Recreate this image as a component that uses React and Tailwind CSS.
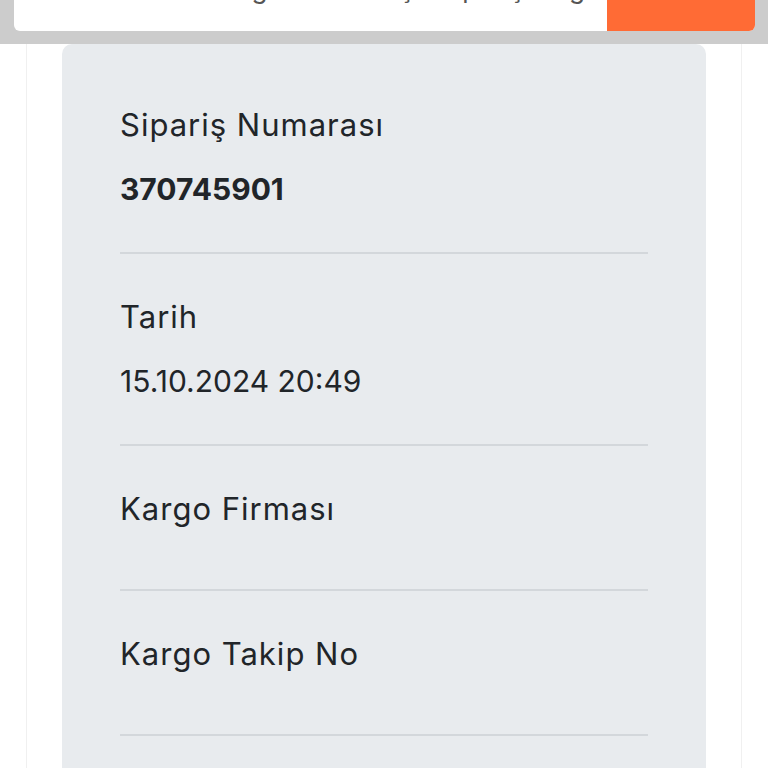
const rows = [
  { label: 'Sipariş Numarası', value: '370745901', bold: true },
  { label: 'Tarih', value: '15.10.2024 20:49' },
  { label: 'Kargo Firması', value: '' },
  { label: 'Kargo Takip No', value: '' },
];

const App = () => {
  return (
    <div className="min-h-screen bg-white text-[#212529]" style={{ fontFamily: 'Inter, "Noto Sans", sans-serif' }}>
      {/* search bar, scrolled mostly out of view */}
      <div className="h-[44px] bg-[#cccccc] pl-[14px] pr-[13px]">
        <div className="flex h-[31px] overflow-hidden rounded-b-[6px] bg-white">
          <div className="flex-1 overflow-hidden">
            <div className="-mt-[24px] whitespace-nowrap pl-[196px] text-[26px] leading-[26px] text-[#555]">
              Kargo durumu için sipariş no giriniz
            </div>
          </div>
          <button className="w-[148px] bg-[#ff6b35] text-white"></button>
        </div>
      </div>

      <div className="mx-[26px] border-x border-[#f0f0f0] px-[35px]">
        <div className="rounded-t-[10px] bg-[#e8ebee] px-[58px] pb-[80px] pt-[18px]">
          {rows.map((row) => (
            <div key={row.label} className="border-b-2 border-[#d3d7db] pb-[40px] pt-[40px]">
              <div className="text-[31px] leading-[45px] tracking-[1px]">{row.label}</div>
              {row.value ? (
                <div className={`mt-[20px] text-[30px] leading-[45px] ${row.bold ? 'font-bold' : ''}`}>{row.value}</div>
              ) : (
                <div className="h-[18px]" />
              )}
            </div>
          ))}
        </div>
      </div>
    </div>
  );
};

export default App;
